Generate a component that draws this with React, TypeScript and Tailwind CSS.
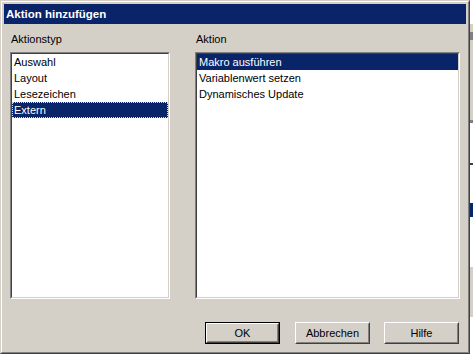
import React, { useState } from "react";

const font = { fontFamily: '"Liberation Sans", Arial, sans-serif' };

const typen = ["Auswahl", "Layout", "Lesezeichen", "Extern"];
const aktionen = ["Makro ausführen", "Variablenwert setzen", "Dynamisches Update"];

const Listbox: React.FC<{
  items: string[];
  selected: number;
  focused?: boolean;
  onSelect: (i: number) => void;
}> = ({ items, selected, focused, onSelect }) => (
  <div className="h-[247px] border border-t-[#808080] border-l-[#808080] border-r-white border-b-white">
    <div className="h-full bg-white border border-t-[#404040] border-l-[#404040] border-r-[#d4d0c8] border-b-[#d4d0c8]">
      {items.map((it, i) => (
        <div
          key={it}
          onClick={() => onSelect(i)}
          className={
            "h-[16px] leading-[14px] pl-[1px] border border-dotted cursor-default " +
            (i === selected
              ? "bg-[#0a246a] text-white " + (focused ? "border-[#f5db95]" : "border-transparent")
              : "text-black border-transparent")
          }
        >
          {it}
        </div>
      ))}
    </div>
  </div>
);

const Button: React.FC<{ label: string; isDefault?: boolean; className?: string }> = ({
  label,
  isDefault,
  className = "",
}) => (
  <div className={"w-[75px] h-[22px] " + (isDefault ? "border border-black " : "") + className}>
    <div className="h-full border border-t-white border-l-white border-r-[#404040] border-b-[#404040]">
      <div className="h-full flex items-center justify-center border border-t-[#d4d0c8] border-l-[#d4d0c8] border-r-[#808080] border-b-[#808080] bg-[#d4d0c8] text-black">
        {label}
      </div>
    </div>
  </div>
);

export default function App() {
  const [typ, setTyp] = useState(3);
  const [aktion, setAktion] = useState(0);

  return (
    <div className="w-[473px] h-[358px] bg-white flex overflow-hidden text-[11px]" style={font}>
      <div className="w-[470px] h-[354px] border border-t-[#d4d0c8] border-l-[#d4d0c8] border-r-[#404040] border-b-[#404040]">
        <div className="h-full border border-t-white border-l-white border-r-[#808080] border-b-[#808080] bg-[#d4d0c8] p-[2px] flex flex-col">
          <div className="h-[20px] bg-[#0a246a] text-white font-bold text-[11.5px] leading-[20px] pl-[2px]">
            Aktion hinzufügen
          </div>
          <div className="flex px-[6px] pt-[8px] gap-[25px]">
            <div className="w-[160px]">
              <div className="h-[14px] leading-[14px] mb-[6px] pl-[1px]">Aktionstyp</div>
              <Listbox items={typen} selected={typ} focused onSelect={setTyp} />
            </div>
            <div className="w-[265px]">
              <div className="h-[14px] leading-[14px] mb-[6px] pl-[1px]">Aktion</div>
              <Listbox items={aktionen} selected={aktion} onSelect={setAktion} />
            </div>
          </div>
          <div className="flex justify-end pr-[7px] mt-[23px]">
            <Button label="OK" isDefault />
            <Button label="Abbrechen" className="ml-[15px]" />
            <Button label="Hilfe" className="ml-[14px]" />
          </div>
        </div>
      </div>
      <div className="w-[3px] h-full flex flex-col">
        <div className="h-[24px] bg-white" />
        <div className="h-[8px] bg-[#d4d0c8]" />
        <div className="h-[8px] bg-[#808080]" />
        <div className="h-[80px] bg-[#d4d0c8]" />
        <div className="h-[3px] bg-[#808080]" />
        <div className="h-[40px] bg-white" />
        <div className="h-[2px] bg-[#404040]" />
        <div className="h-[38px] bg-white" />
        <div className="h-[14px] bg-[#0a246a]" />
        <div className="h-[50px] bg-white" />
        <div className="h-[50px] bg-[#d4d0c8]" />
        <div className="flex-1 bg-white" />
      </div>
    </div>
  );
}
